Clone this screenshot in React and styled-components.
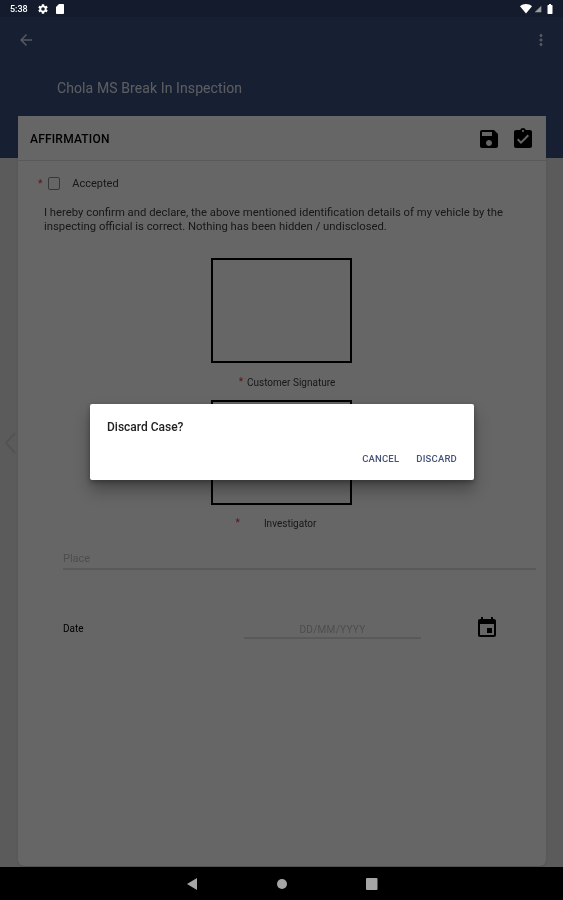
import React from "react";
import styled, { createGlobalStyle } from "styled-components";

const Global = createGlobalStyle`
  html, body { margin: 0; padding: 0; background: #000; }
  body { font-family: Roboto, "Liberation Sans", sans-serif; }
  * { box-sizing: border-box; }
`;

const Screen = styled.div`
  position: relative;
  width: 563px;
  height: 900px;
  overflow: hidden;
  display: flex;
  flex-direction: column;
  background: #e4e4e4;
  filter: blur(0.35px);
`;
const StatusBar = styled.div`
  position: relative;
  z-index: 3;
  height: 17px;
  flex: none;
  padding: 1px 7px 0 10px;
  display: flex;
  align-items: center;
  background: #141b2c;
  color: #fff;
`;
const Clock = styled.span`
  font-size: 9px;
  font-weight: 500;
  width: 27px;
`;
const StatusGroup = styled.div`
  display: flex;
  align-items: center;
  gap: ${p => p.$gap}px;
  margin-left: ${p => (p.$end ? "auto" : "0")};
`;
const AppHeader = styled.header`
  flex: none;
  height: 141px;
  padding: 14px 13px 0 17px;
  background: #3a4f80;
  color: #fff;
`;
const ToolRow = styled.div`
  display: flex;
  justify-content: space-between;
  align-items: center;
  height: 18px;
  color: rgba(255, 255, 255, 0.8);
`;
const AppTitle = styled.h1`
  margin: 30px 0 0 40px;
  font-size: 14px;
  line-height: 18px;
  font-weight: 400;
  letter-spacing: 0.1px;
  color: rgba(255, 255, 255, 0.88);
`;
const Card = styled.main`
  position: relative;
  z-index: 1;
  flex: 1;
  margin: -42px 17px 1px 18px;
  background: #fff;
  border-radius: 0 0 6px 6px;
  box-shadow: 0 1px 2px rgba(0, 0, 0, 0.15);
  display: flex;
  flex-direction: column;
`;
const CardHeader = styled.div`
  height: 45px;
  flex: none;
  padding: 1px 11px 0 12px;
  display: flex;
  align-items: center;
  justify-content: space-between;
  border-bottom: 1px solid #e0e0e0;
  color: #000;
`;
const CardTitle = styled.h2`
  margin: 0;
  font-size: 12px;
  font-weight: 500;
  letter-spacing: 0.2px;
`;
const IconRow = styled.div`
  display: flex;
  gap: 10px;
`;
const Body = styled.div`
  padding: 14px 10px 0 26px;
  display: flex;
  flex-direction: column;
  color: #333;
`;
const AcceptRow = styled.div`
  display: flex;
  align-items: center;
  height: 17px;
  margin-left: -6px;
`;
const Star = styled.span`
  color: #e0323c;
  font-size: 10px;
  line-height: 10px;
`;
const Check = styled.span`
  width: 12px;
  height: 13px;
  margin: 0 12px 0 6px;
  border: 1.5px solid #8a8a8a;
  border-radius: 2px;
`;
const SmallLabel = styled.span`
  font-size: ${p => p.$size || 10}px;
  color: #3c3c3c;
`;
const Declaration = styled.p`
  margin: 14px 0 0 0;
  font-size: 11.3px;
  line-height: 14px;
  color: #3c3c3c;
`;
const SignBlock = styled.div`
  display: flex;
  flex-direction: column;
  align-items: center;
  margin-left: -26px;
  margin-right: -10px;
`;
const SignBox = styled.div`
  width: 141px;
  height: 105px;
  border: 2px solid #000;
  margin-top: ${p => p.$top}px;
  transform: translateX(-1px);
`;
const SignCaption = styled.div`
  height: 14px;
  margin-top: ${p => p.$top}px;
  display: flex;
  align-items: center;
  justify-content: center;
  gap: ${p => p.$gap}px;
  transform: translateX(${p => p.$shift}px);
`;
const PlaceField = styled.div`
  margin: 20px 0 0 19px;
  height: 20px;
  border-bottom: 2px solid #dedede;
  font-size: 11px;
  line-height: 17px;
  color: #c0c0c0;
`;
const DateRow = styled.div`
  display: flex;
  align-items: center;
  margin: 45px 0 0 19px;
  height: 26px;
`;
const DateLabel = styled.span`
  width: 181px;
  font-size: 10px;
  color: #000;
`;
const DateField = styled.div`
  width: 177px;
  height: 19px;
  margin-top: 3px;
  border-bottom: 2px solid #dedede;
  text-align: center;
  font-size: 10px;
  line-height: 20px;
  letter-spacing: 0.3px;
  color: #c0c0c0;
`;
const DateIcon = styled.div`
  margin-left: 54px;
  color: #000;
  line-height: 0;
`;
const PrevArrow = styled.div`
  position: absolute;
  left: 2px;
  top: 431px;
  line-height: 0;
  color: #d0d0d0;
`;
const NavBar = styled.nav`
  position: relative;
  z-index: 3;
  flex: none;
  height: 33px;
  background: #000;
  display: flex;
  align-items: center;
  justify-content: center;
  gap: 78px;
`;
const Scrim = styled.div`
  position: absolute;
  inset: 0;
  z-index: 2;
  background: rgba(0, 0, 0, 0.6);
  display: flex;
  align-items: flex-start;
  justify-content: center;
`;
const Dialog = styled.div`
  width: 384px;
  height: 76px;
  margin: 404px 0 0 1px;
  background: #fff;
  border-radius: 2px;
  box-shadow: 0 10px 16px rgba(0, 0, 0, 0.3), 0 2px 5px rgba(0, 0, 0, 0.3);
  padding: 14px 17px 0;
  display: flex;
  flex-direction: column;
`;
const DialogTitle = styled.div`
  font-size: 12px;
  line-height: 18px;
  font-weight: 500;
  color: #222;
`;
const DialogActions = styled.div`
  display: flex;
  justify-content: flex-end;
  gap: 17px;
  margin-top: 16px;
`;
const DialogButton = styled.button`
  border: 0;
  padding: 0;
  background: none;
  font-family: inherit;
  font-size: 9.5px;
  line-height: 14px;
  font-weight: 500;
  letter-spacing: 0.2px;
  color: #47527a;
`;

const Icon = ({ d, size = 24, fill = "currentColor" }) => (
  <svg width={size} height={size} viewBox="0 0 24 24" fill={fill}><path d={d} /></svg>
);
const SAVE = "M17 3H5c-1.11 0-2 .9-2 2v14c0 1.1.89 2 2 2h14c1.1 0 2-.9 2-2V7l-4-4zm-5 16c-1.66 0-3-1.34-3-3s1.34-3 3-3 3 1.34 3 3-1.34 3-3 3zm3-10H5V5h10v4z";
const TURNED_IN = "M19 3h-4.18C14.4 1.84 13.3 1 12 1c-1.3 0-2.4.84-2.82 2H5c-1.1 0-2 .9-2 2v14c0 1.1.9 2 2 2h14c1.1 0 2-.9 2-2V5c0-1.1-.9-2-2-2zm-7 0c.55 0 1 .45 1 1s-.45 1-1 1-1-.45-1-1 .45-1 1-1zm-2 14l-4-4 1.41-1.41L10 14.17l6.59-6.59L18 9l-8 8z";
const EVENT = "M17 12h-5v5h5v-5zM16 1v2H8V1H6v2H5c-1.11 0-1.99.9-1.99 2L3 19c0 1.1.89 2 2 2h14c1.1 0 2-.9 2-2V5c0-1.1-.9-2-2-2h-1V1h-2zm3 18H5V8h14v11z";
const BACK = "M20 11H7.83l5.59-5.59L12 4l-8 8 8 8 1.41-1.41L7.83 13H20v-2z";
const MORE = "M12 8c1.1 0 2-.9 2-2s-.9-2-2-2-2 .9-2 2 .9 2 2 2zm0 2c-1.1 0-2 .9-2 2s.9 2 2 2 2-.9 2-2-.9-2-2-2zm0 6c-1.1 0-2 .9-2 2s.9 2 2 2 2-.9 2-2-.9-2-2-2z";
const GEAR = "M19.14 12.94c.04-.3.06-.61.06-.94s-.02-.64-.07-.94l2.03-1.58a.49.49 0 0 0 .12-.61l-1.92-3.32a.49.49 0 0 0-.59-.22l-2.39.96c-.5-.38-1.03-.7-1.62-.94l-.36-2.54a.48.48 0 0 0-.48-.41h-3.84a.48.48 0 0 0-.47.41l-.36 2.54c-.59.24-1.13.57-1.62.94l-2.39-.96a.48.48 0 0 0-.59.22L2.74 8.87a.48.48 0 0 0 .12.61l2.03 1.58c-.05.3-.09.63-.09.94s.02.64.07.94l-2.03 1.58a.49.49 0 0 0-.12.61l1.92 3.32c.12.22.37.29.59.22l2.39-.96c.5.38 1.03.7 1.62.94l.36 2.54c.05.24.24.41.48.41h3.84c.24 0 .44-.17.47-.41l.36-2.54c.59-.24 1.13-.56 1.62-.94l2.39.96c.22.08.47 0 .59-.22l1.92-3.32a.48.48 0 0 0-.12-.61l-2.01-1.58zM12 15.6A3.6 3.6 0 1 1 12 8.4a3.6 3.6 0 0 1 0 7.2z";
const SD = "M18 2h-8L4 8v12c0 1.1.9 2 2 2h12c1.1 0 2-.9 2-2V4c0-1.1-.9-2-2-2z";
const WIFI = "M12 21 0 6.5C3.4 3.7 7.5 2 12 2s8.6 1.7 12 4.5L12 21z";
const SIGNAL = "M22 22H2L22 2v20z";
const BATTERY = "M16 4h-2V2h-4v2H8c-.6 0-1 .4-1 1v16c0 .6.4 1 1 1h8c.6 0 1-.4 1-1V5c0-.6-.4-1-1-1z";

export default function App() {
  return (
    <Screen>
      <Global />
      <StatusBar>
        <Clock>5:38</Clock>
        <StatusGroup $gap={5}>
          <Icon d={GEAR} size={12} />
          <Icon d={SD} size={12} />
        </StatusGroup>
        <StatusGroup $end $gap={2}>
          <Icon d={WIFI} size={12} />
          <Icon d={SIGNAL} size={8} fill="#9a9a9a" />
          <Icon d={BATTERY} size={12} />
        </StatusGroup>
      </StatusBar>
      <AppHeader>
        <ToolRow>
          <Icon d={BACK} size={18} />
          <Icon d={MORE} size={18} />
        </ToolRow>
        <AppTitle>Chola MS Break In Inspection</AppTitle>
      </AppHeader>
      <Card>
        <CardHeader>
          <CardTitle>AFFIRMATION</CardTitle>
          <IconRow>
            <Icon d={SAVE} />
            <Icon d={TURNED_IN} />
          </IconRow>
        </CardHeader>
        <Body>
          <AcceptRow>
            <Star>*</Star>
            <Check />
            <SmallLabel $size={11}>Accepted</SmallLabel>
          </AcceptRow>
          <Declaration>
            I hereby confirm and declare, the above mentioned identification details of my vehicle by the inspecting official is correct. Nothing has been hidden / undisclosed.
          </Declaration>
          <SignBlock>
            <SignBox $top={24} />
            <SignCaption $top={12} $gap={4} $shift={5}>
              <Star>*</Star>
              <SmallLabel>Customer Signature</SmallLabel>
            </SignCaption>
            <SignBox $top={11} />
            <SignCaption $top={11} $gap={24} $shift={-6}>
              <Star>*</Star>
              <SmallLabel>Investigator</SmallLabel>
            </SignCaption>
          </SignBlock>
          <PlaceField>Place</PlaceField>
          <DateRow>
            <DateLabel>Date</DateLabel>
            <DateField>DD/MM/YYYY</DateField>
            <DateIcon><Icon d={EVENT} /></DateIcon>
          </DateRow>
        </Body>
      </Card>
      <PrevArrow>
        <svg width="18" height="24" viewBox="0 0 18 24" fill="none" stroke="currentColor" strokeWidth="2.2"><path d="M13 2 4 12l9 10" /></svg>
      </PrevArrow>
      <Scrim>
        <Dialog>
          <DialogTitle>Discard Case?</DialogTitle>
          <DialogActions>
            <DialogButton>CANCEL</DialogButton>
            <DialogButton>DISCARD</DialogButton>
          </DialogActions>
        </Dialog>
      </Scrim>
      <NavBar>
        <svg width="12" height="14" viewBox="0 0 12 14" fill="#a6a6a6"><path d="M11 1v12L1 7z" /></svg>
        <svg width="12" height="12" viewBox="0 0 12 12" fill="#a6a6a6"><circle cx="6" cy="6" r="5" /></svg>
        <svg width="12" height="12" viewBox="0 0 12 12" fill="#a6a6a6"><rect width="11.5" height="12" rx="1" /></svg>
      </NavBar>
    </Screen>
  );
}
